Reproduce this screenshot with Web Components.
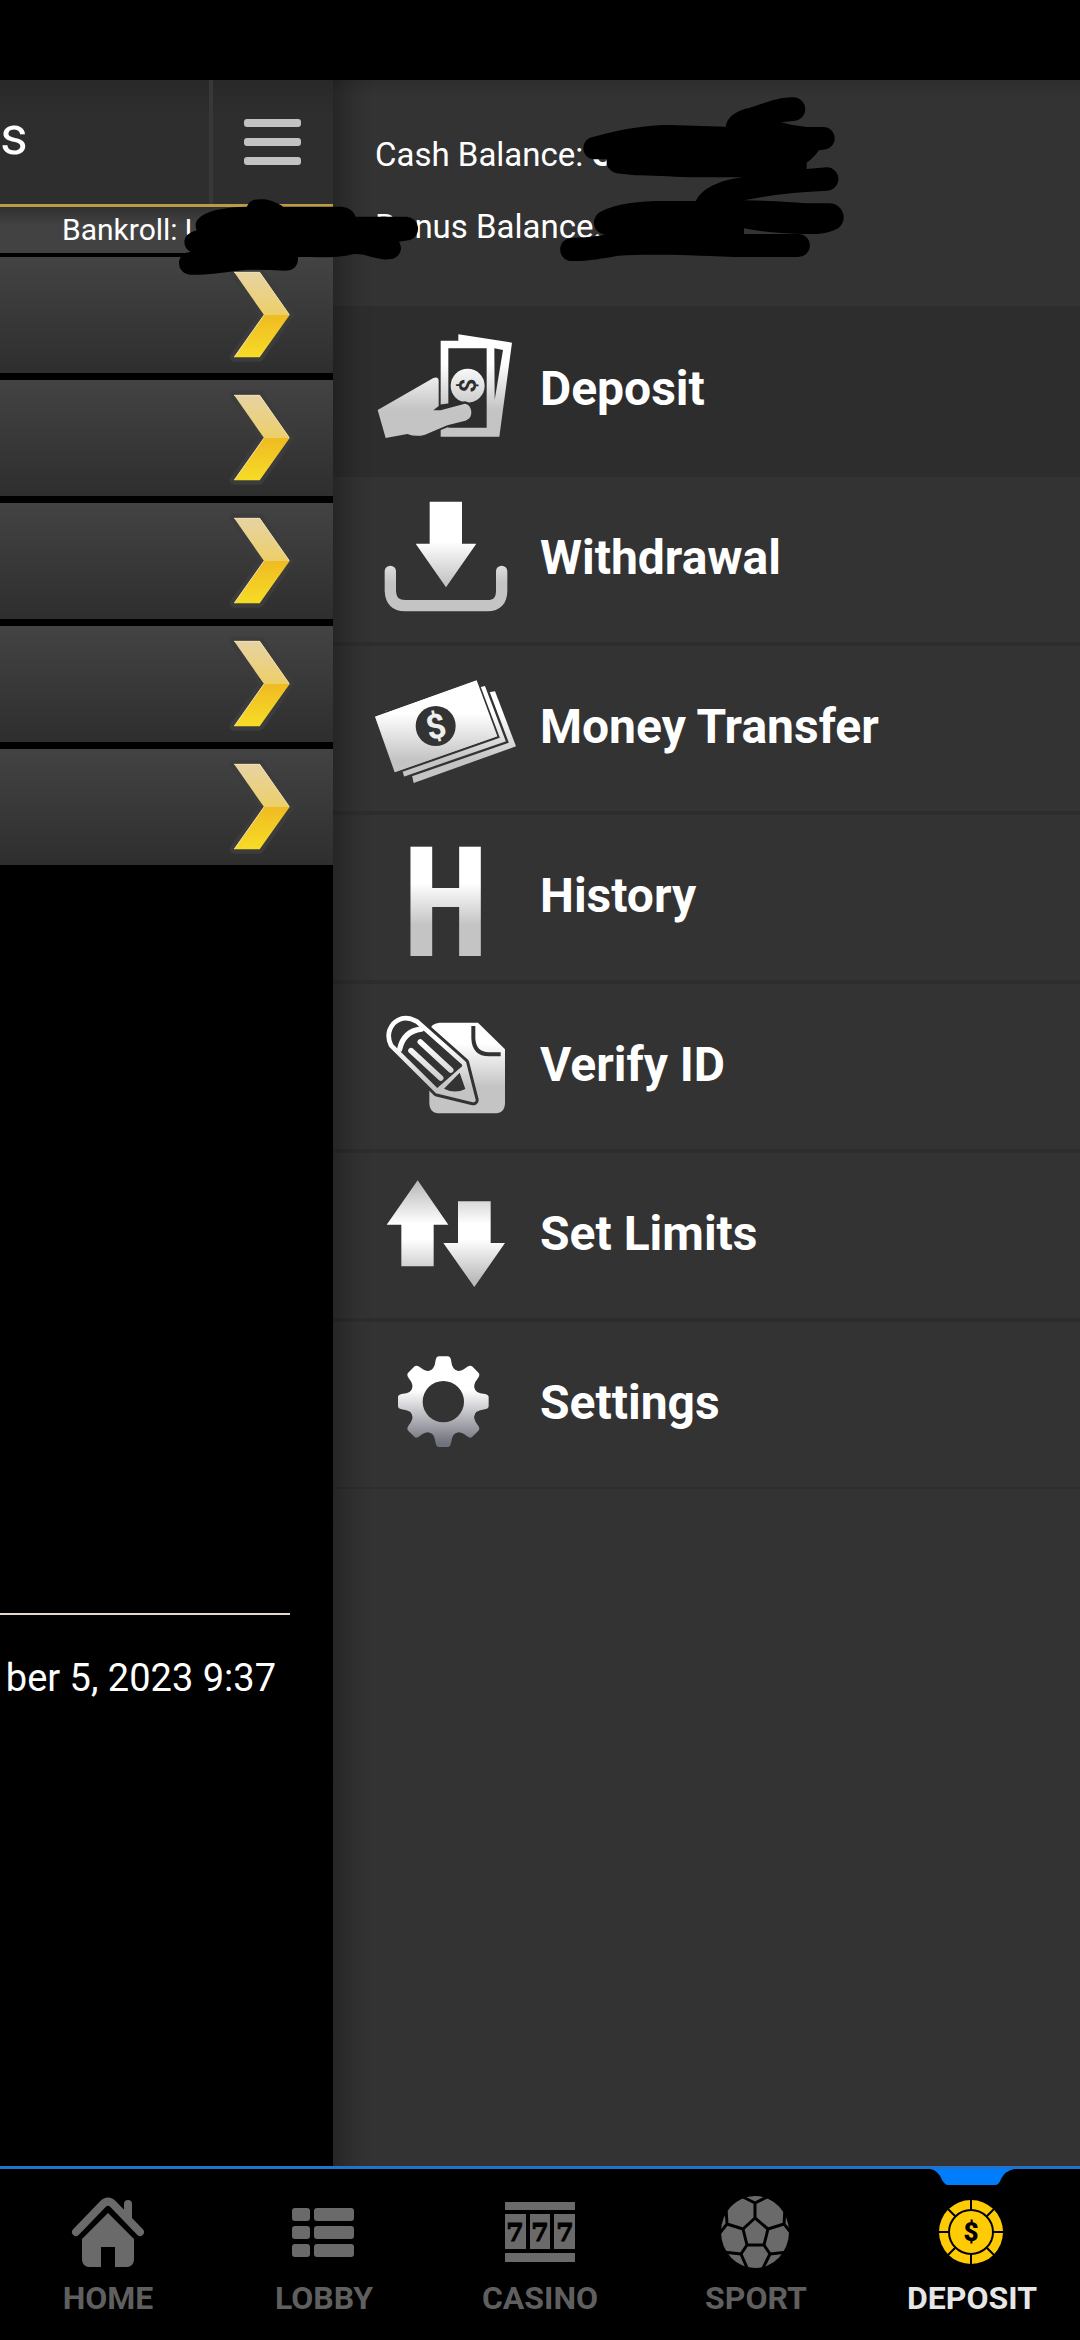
<!DOCTYPE html>
<html lang="en">
<head>
<meta charset="utf-8">
<meta name="viewport" content="width=device-width, initial-scale=1">
<title>Account menu</title>
<style>
    body {
        margin: 0;
        background-color: #000;
        color: #fff;
        font-family: Roboto, "Liberation Sans", sans-serif;
    }
</style>
</head>
<body>
<app-screen>
    <lobby-pane slot="page"></lobby-pane>
    <account-drawer slot="drawer">
        <menu-item icon="deposit" active>Deposit</menu-item>
        <menu-item icon="withdrawal">Withdrawal</menu-item>
        <menu-item icon="transfer">Money Transfer</menu-item>
        <menu-item icon="history">History</menu-item>
        <menu-item icon="verify">Verify ID</menu-item>
        <menu-item icon="limits">Set Limits</menu-item>
        <menu-item icon="settings">Settings</menu-item>
    </account-drawer>
    <tab-bar slot="tabs">
        <tab-item icon="home">HOME</tab-item>
        <tab-item icon="lobby">LOBBY</tab-item>
        <tab-item icon="casino">CASINO</tab-item>
        <tab-item icon="sport">SPORT</tab-item>
        <tab-item icon="chip" active>DEPOSIT</tab-item>
    </tab-bar>
</app-screen>

<script>
// each icon is a mask, the gradient is painted through it; its letters are drawn on top
const menuIcons = {
    deposit: {
        box: '90 24 450 495', from: 190, to: 330,
        shape: `
            <path fill="#fff" d="M355 103 L516 128 L478 410 H302 V122 H355Z"/>
            <path d="M325 145 H440 V383 H325Z M463 145 L489 150 L464 300Z"/>
            <circle cx="383" cy="257" r="51" fill="#fff"/>
            <path stroke="#000" stroke-width="8" d="M113 330 L280 234 Q297 228 296 245 V318 L375 308 Q394 312 394 340 Q392 358 376 362 L322 378 L255 404 Q228 412 202 402 L137 414Z"/>
            <path fill="#fff" d="M113 330 L280 234 Q297 228 296 245 V318 L280 331 H302 L375 311 Q394 314 394 340 Q392 358 376 362 L322 376 L255 404 Q228 412 202 402 L137 414Z"/>`,
        letter: '<text transform="rotate(-90 383 257)" x="383" y="282" text-anchor="middle" fill="#2e2e2e" font-size="72">$</text>'
    },
    withdrawal: {
        box: '90 531 450 495', from: 725, to: 850,
        shape: `
            <path fill="#fff" d="M269 605 H366 V731 H409 L318 862 L227 731 H269Z"/>
            <path fill="none" stroke="#fff" stroke-width="34" stroke-linecap="round" d="M151 814 V872 Q153 917 195 917 H442 Q485 917 485 872 V814"/>`
    },
    transfer: {
        box: '90 -12 450 495', from: 190, to: 330,
        shape: `
            <path fill="#fff" d="M166 170 L465 124 L528 289 L221 399Z"/>
            <path fill="#fff" stroke="#000" stroke-width="7" d="M130 180 L437 104 L502 276 L190 384Z"/>
            <path fill="#fff" stroke="#000" stroke-width="7" d="M102 198 L410 88 L475 261 L164 370Z"/>
            <path d="M98 206 L162 376 L188 368 V384 L217 382 V402 H90 V190Z"/>
            <path fill="#fff" d="M105 200 L410 91 L472 259 L164 367Z"/>
            <circle cx="287" cy="228" r="60"/>`,
        letter: '<text transform="rotate(-14 287 228)" x="287" y="265" text-anchor="middle" fill="#eee" font-size="102">$</text>'
    },
    history: {
        box: '90 495 450 495', from: 700, to: 825,
        shape: '',
        letter: '<text x="317" y="918" text-anchor="middle" fill="url(#shade)" font-family="DejaVu Sans Mono, monospace" font-size="450">H</text>'
    },
    verify: {
        box: '90 12 450 495', from: 190, to: 320,
        shape: `
            <path fill="#fff" d="M298 128 H414 L495 208 V368 Q495 400 463 400 H300 Q268 400 268 368 V158 Q270 130 298 128Z"/>
            <path fill="none" stroke="#000" stroke-width="12" d="M400 138 V175 Q402 222 447 223 H482"/>
            <path stroke="#000" stroke-width="32" stroke-linejoin="round" d="M153 196 Q136 160 160 131 Q190 102 230 124 L372 250 L400 360 L292 334Z"/>
            <path stroke="#fff" stroke-width="14" stroke-linejoin="round" d="M153 196 Q136 160 160 131 Q190 102 230 124 L372 250 L400 360 L292 334Z"/>
            <path fill="#fff" d="M285 330 L374 252 L402 362Z"/>
            <path d="M359 278 L376 327 Q345 343 312 326Z"/>
            <path fill="none" stroke="#fff" stroke-width="16" stroke-linecap="round" d="M179 208 Q190 154 244 147"/>
            <path fill="none" stroke="#fff" stroke-width="17" stroke-linecap="round" d="M241 186 L332 270 M213 212 L302 294"/>`
    },
    limits: {
        box: '90 519 450 495', from: 610, to: 900, flip: true,
        shape: `
            <path fill="#fff" d="M233 601 L325 734 H281 V859 H184 V734 H140Z"/>
            <path fill="#fff" d="M354 664 H452 V789 H495 L403 921 L310 789 H354Z"/>`
    },
    settings: {
        box: '90 36 450 495', from: 240, to: 400, dark: '#70727c',
        shape: `
            <circle cx="310" cy="275" r="102" fill="#fff"/>
            ${[0, 45, 90, 135, 180, 225, 270, 315].map(a => `
            <path fill="#fff" transform="rotate(${a} 310 275)" d="M262 186 Q284 182 287 150 Q289 139 297 139 H323 Q331 139 333 150 Q336 182 358 186Z"/>`).join('')}
            <circle cx="310" cy="275" r="62"/>`
    }
};

const tabIcons = {
    home: `
        <path fill="none" stroke="currentColor" stroke-width="8" stroke-linecap="round" stroke-linejoin="round" d="M8 40 L35 12 Q40 7 45 12 L72 40 M60 12 V26"/>
        <path fill="currentColor" d="M40 21 L66 47 V68 Q65 75 59 75 H47 V55 H33 V75 H21 Q15 75 14 68 V47Z"/>`,
    lobby: `
        <g fill="currentColor">
            <rect x="8" y="16" width="18" height="13" rx="3"/><rect x="30" y="16" width="40" height="13" rx="3"/>
            <rect x="8" y="34" width="18" height="13" rx="3"/><rect x="30" y="34" width="40" height="13" rx="3"/>
            <rect x="8" y="52" width="18" height="13" rx="3"/><rect x="30" y="52" width="40" height="13" rx="3"/>
        </g>`,
    casino: `
        <path fill="currentColor" d="M5 10 H75 V18 H5Z M5 22 H26 V57 H5Z M30 22 H50 V57 H30Z M54 22 H75 V57 H54Z M5 61 H75 V70 H5Z"/>
        <g fill="#000" stroke="#000" font-family="DejaVu Serif, serif" font-size="25" font-weight="700" text-anchor="middle">
            <text x="15" y="49">7</text><text x="40" y="49">7</text><text x="65" y="49">7</text>
        </g>`,
    sport: `
        <ellipse cx="39" cy="40" rx="34" ry="36" fill="currentColor"/>
        <path fill="none" stroke="#000" stroke-width="3" stroke-linejoin="round" d="M39 26 L52 37 L48 53 H31 L27 37Z
            M39 26 V11 M25 4 L39 11 L53 4 M52 37 L68 32 M69 16 L68 32 L76 42 M48 53 L54 62 M72 60 L54 62 L46 78
            M31 53 L25 62 M7 60 L25 62 L32 78 M27 37 L11 32 M10 16 L11 32 L3 42"/>`,
    chip: `
        <circle cx="39" cy="40" r="32" fill="currentColor"/>
        <circle cx="39" cy="40" r="22" fill="none" stroke="#000" stroke-width="2"/>
        <path stroke="#000" stroke-width="2" d="M39 8 V18 M39 62 V72 M7 40 H17 M61 40 H71 M16 17 L23 24 M55 56 L62 63 M62 17 L55 24 M23 56 L16 63"/>
        <text x="39" y="49" fill="#000" font-size="26" font-weight="900" text-anchor="middle">$</text>`
};

class AppScreen extends HTMLElement {
    constructor() {
        super();
        this.attachShadow({ mode: 'open' });
    }

    connectedCallback() {
        this.shadowRoot.innerHTML = `
        <style>
        :host {
            display: flex;
            flex-direction: column;
            position: relative;
            min-height: 100vh;
            overflow: hidden;
        }

        .status {
            height: 80px;
        }

        .content {
            flex: 1;
            display: grid;
            grid-template-columns: 333px 1fr;
        }

        .scribble {
            position: absolute;
            fill: #000;
        }

        .bankroll {
            left: 0;
            top: 60px;
        }

        .balance {
            left: 350px;
            top: 70px;
        }
        </style>

        <div class="status"></div>
        <div class="content">
            <slot name="page"></slot>
            <slot name="drawer"></slot>
        </div>
        <slot name="tabs"></slot>
        <svg class="scribble bankroll" width="440" height="330" viewBox="0 0 1320 990" aria-hidden="true">
            <path d="M741 440 C748 420 764 416 790 418 C815 420 832 430 850 440 H1025 Q1056 442 1067 470 H1220 A36 36 0 0 1 1230 540 L1197 545 Q1204 556 1203 568 A36 36 0 0 1 1165 598 C1125 600 1100 580 1060 582 C1030 590 1000 592 960 592 L894 590 Q896 630 858 632 C820 630 780 629 740 629 C680 635 625 646 570 644 A34 34 0 0 1 572 576 Q553 566 553 544 Q556 520 590 511 C572 470 630 442 741 440Z"/>
        </svg>
        <svg class="scribble balance" width="520" height="240" viewBox="0 0 1560 720" aria-hidden="true">
            <path d="M728 201 C780 188 860 165 960 165 L1128 170 C1130 140 1165 120 1195 115 C1240 100 1290 80 1330 82 A35 35 0 0 1 1330 153 L1293 157 Q1330 168 1370 171 H1420 A34 34 0 0 1 1420 239 L1407 241 Q1390 265 1370 278 V297 L1430 292 A35 35 0 0 1 1430 362 C1340 366 1260 375 1182 391 C1260 392 1320 396 1370 400 H1440 A42 42 0 0 1 1465 475 Q1430 492 1400 492 C1320 492 1250 488 1182 475 V492 H1345 A34 34 0 0 1 1345 561 H1150 C1000 555 900 552 805 557 C760 565 710 574 665 573 A33 33 0 0 1 665 504 C700 502 740 500 782 491 A36 36 0 0 1 745 430 C780 405 860 393 930 393 H1038 C1055 355 1110 330 1180 322 H1020 C960 320 900 316 855 316 L800 310 Q780 305 770 285 V268 H728 A34 34 0 0 1 728 201Z"/>
        </svg>
        `;
    }
}

class LobbyPane extends HTMLElement {
    constructor() {
        super();
        this.attachShadow({ mode: 'open' });
    }

    connectedCallback() {
        const row = `
            <a class="row" href="#game" aria-label="Open">
                <svg width="70" height="100" viewBox="0 0 210 300" aria-hidden="true">
                    <path fill="none" stroke="#3c3c3c" stroke-width="26" stroke-linejoin="round" d="M21 21 H98 L188 150 L98 277 H21 L111 150Z"/>
                    <path fill="url(#top)" d="M21 21 H98 L188 150 H111Z"/>
                    <path fill="url(#bottom)" d="M111 150 H188 L98 277 H21Z"/>
                    <path fill="none" stroke="#f0dfb0" stroke-width="3" d="M21 22 H98 L186 148 M111 150 L22 276"/>
                </svg>
            </a>`;

        this.shadowRoot.innerHTML = `
        <style>
        :host {
            display: block;
            min-width: 0;
            overflow: hidden;
            background-color: #000;
        }

        header {
            display: flex;
            height: 124px;
            background: linear-gradient(#292929, #2e2e2e 30%);
            border-bottom: 3px solid #bb9a48;
        }

        h1 {
            flex: 1;
            margin: 0;
            font-size: 54px;
            font-weight: 400;
            line-height: 112px;
        }

        header button {
            display: flex;
            flex-direction: column;
            align-items: center;
            gap: 11px;
            width: 124px;
            padding: 39px 2px 0 0;
            border: 0;
            border-left: 4px solid #383838;
            background: none;
        }

        header button span {
            width: 57px;
            height: 8px;
            border-radius: 3px;
            background-color: #c2c2c2;
        }

        .bankroll {
            height: 46px;
            padding-left: 62px;
            background: linear-gradient(#303030, #424242 40%);
            font-size: 30px;
            line-height: 46px;
            white-space: nowrap;
        }

        nav {
            display: flex;
            flex-direction: column;
            gap: 7px;
            padding-top: 4px;
        }

        .row {
            display: flex;
            align-items: center;
            justify-content: flex-end;
            height: 116px;
            padding-right: 36px;
            background: linear-gradient(#434343, #2e2e2e);
        }

        footer {
            margin: 748px 43px 0 0;
            border-top: 2px solid #e3d8ca;
            padding: 37px 14px 0 0;
            font-size: 38px;
            line-height: 52px;
            text-align: right;
            white-space: nowrap;
        }
        </style>

        <svg width="0" height="0" style="display: block" aria-hidden="true">
            <linearGradient id="top" x2="0" y2="1"><stop stop-color="#e7d3a4"/><stop offset="1" stop-color="#eccf69"/></linearGradient>
            <linearGradient id="bottom" x2="0" y2="1"><stop stop-color="#efbb22"/><stop offset="1" stop-color="#f7dc26"/></linearGradient>
        </svg>
        <header>
            <h1>s</h1>
            <button type="button" aria-label="Menu"><span></span><span></span><span></span></button>
        </header>
        <div class="bankroll">Bankroll: U</div>
        <nav>${row.repeat(5)}</nav>
        <footer>ber 5, 2023 9:37</footer>
        `;
    }
}

class AccountDrawer extends HTMLElement {
    constructor() {
        super();
        this.attachShadow({ mode: 'open' });
    }

    connectedCallback() {
        this.shadowRoot.innerHTML = `
        <style>
        :host {
            display: block;
            background: linear-gradient(90deg, rgba(0, 0, 0, 0.26), rgba(0, 0, 0, 0.06) 24px, transparent 42px), linear-gradient(#2d2d2d, #333 16px);
        }

        .balances {
            display: flex;
            flex-direction: column;
            gap: 24px;
            height: 226px;
            box-sizing: border-box;
            padding: 51px 0 0 42px;
            font-size: 33px;
            line-height: 48px;
        }
        </style>

        <div class="balances">
            <div>Cash Balance: <b>C</b></div>
            <div>Bonus Balance:</div>
        </div>
        <nav><slot></slot></nav>
        `;
    }
}

class MenuItem extends HTMLElement {
    constructor() {
        super();
        this.attachShadow({ mode: 'open' });
    }

    connectedCallback() {
        this.render();
    }

    render() {
        const icon = menuIcons[this.getAttribute('icon')];
        const [x, y, width, height] = icon.box.split(' ');
        const dark = icon.dark || '#c4c4c4';
        // the up and down arrows are grey at both ends
        const stops = icon.flip
            ? '<stop stop-color="#bbb"/><stop offset=".42" stop-color="#fff"/><stop offset=".58" stop-color="#fff"/><stop offset="1" stop-color="#bbb"/>'
            : `<stop stop-color="#fff"/><stop offset="1" stop-color="${dark}"/>`;

        this.shadowRoot.innerHTML = `
        <style>
        :host {
            display: block;
            border-top: 2px solid rgba(0, 0, 0, 0.1);
            border-bottom: 2px solid rgba(0, 0, 0, 0.1);
        }

        :host([active]) {
            border-color: transparent;
            background-color: rgba(0, 0, 0, 0.1);
        }

        a {
            display: flex;
            align-items: center;
            gap: 20px;
            height: 165px;
            padding-left: 37px;
            color: #fff;
            font-size: 48px;
            font-weight: 700;
            line-height: 56px;
            text-decoration: none;
        }

        span {
            padding-bottom: 4px;
        }
        </style>

        <a href="#${this.getAttribute('icon')}">
            <svg width="150" height="165" viewBox="${icon.box}" aria-hidden="true">
                <linearGradient id="shade" gradientUnits="userSpaceOnUse" x1="0" y1="${icon.from}" x2="0" y2="${icon.to}">${stops}</linearGradient>
                <mask id="shape" maskUnits="userSpaceOnUse" x="${x}" y="${y}" width="${width}" height="${height}">${icon.shape}</mask>
                <rect x="${x}" y="${y}" width="${width}" height="${height}" fill="url(#shade)" mask="url(#shape)"/>
                ${icon.letter || ''}
            </svg>
            <span><slot></slot></span>
        </a>
        `;
    }
}

class TabBar extends HTMLElement {
    constructor() {
        super();
        this.attachShadow({ mode: 'open' });
    }

    connectedCallback() {
        this.shadowRoot.innerHTML = `
        <style>
        :host {
            display: block;
            border-top: 3px solid #2273cc;
            background-color: #000;
        }

        nav {
            display: grid;
            grid-template-columns: repeat(5, 1fr);
            height: 171px;
        }
        </style>

        <nav><slot></slot></nav>
        `;
    }
}

class TabItem extends HTMLElement {
    constructor() {
        super();
        this.attachShadow({ mode: 'open' });
    }

    connectedCallback() {
        const icon = this.getAttribute('icon');
        const marker = this.hasAttribute('active')
            ? '<svg class="marker" width="84" height="16" viewBox="0 0 84 16" aria-hidden="true"><path fill="#007dfa" d="M0 0 H84 Q75 2 71 10 Q69 16 65 16 H18 Q15 16 12 11 Q8 1 0 0Z"/></svg>'
            : '';

        this.shadowRoot.innerHTML = `
        <style>
        :host {
            display: block;
            position: relative;
            color: #6a6a6a;
        }

        :host([active]) {
            color: #ffcb05;
        }

        a {
            display: flex;
            flex-direction: column;
            align-items: center;
            gap: 6px;
            padding-top: 23px;
            color: inherit;
            text-decoration: none;
        }

        span {
            color: #5f5f5f;
            font-size: 32px;
            font-weight: 700;
            line-height: 40px;
        }

        :host([active]) span {
            color: #e6e6e6;
        }

        .marker {
            position: absolute;
            top: 0;
            left: calc(50% - 42px);
        }
        </style>

        <a href="#${icon}">
            ${marker}
            <svg width="80" height="80" viewBox="0 0 80 80" aria-hidden="true">${tabIcons[icon]}</svg>
            <span><slot></slot></span>
        </a>
        `;
    }
}

customElements.define("app-screen", AppScreen);
customElements.define("lobby-pane", LobbyPane);
customElements.define("account-drawer", AccountDrawer);
customElements.define("menu-item", MenuItem);
customElements.define("tab-bar", TabBar);
customElements.define("tab-item", TabItem);
</script>
</body>
</html>
